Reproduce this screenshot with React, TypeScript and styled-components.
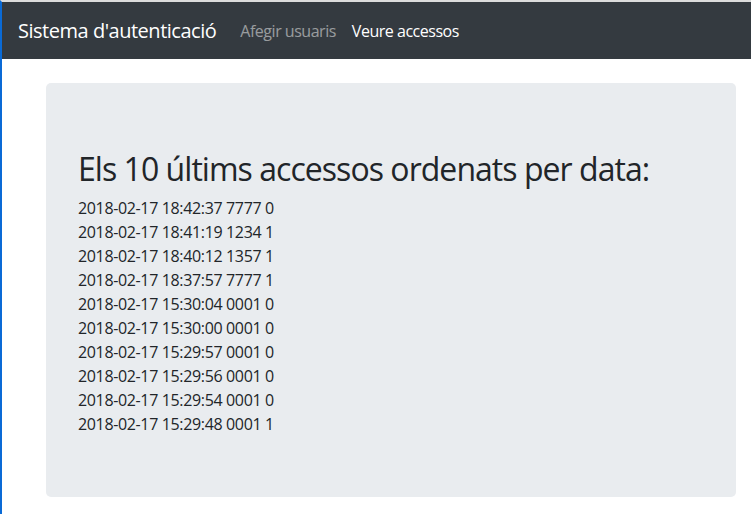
import styled, { createGlobalStyle } from 'styled-components'

const GlobalStyle = createGlobalStyle`
  html, body {
    margin: 0;
    padding: 0;
    background: #fff;
  }
  body {
    font-family: "Open Sans", "Noto Sans", Arial, sans-serif;
    font-size: 16px;
    line-height: 1.5;
    color: #212529;
    letter-spacing: -0.022em;
  }
`

const Frame = styled.div`
  min-height: 514px;
  box-sizing: border-box;
  border-left: 2px solid #0a6ad6;
  border-top: 2px solid #dcdcdc;
`

const NavBar = styled.nav`
  display: flex;
  align-items: center;
  height: 57px;
  box-sizing: border-box;
  padding: 8px 16px;
  background-color: #343a40;
`

const Brand = styled.a`
  color: #fff;
  font-size: 20px;
  margin-right: 16px;
  white-space: nowrap;
  text-decoration: none;
  letter-spacing: -0.024em;
`

const NavLinks = styled.div`
  display: flex;
`

const NavLink = styled.a<{ $active?: boolean }>`
  padding: 0 8px;
  color: ${(props) => (props.$active ? '#fff' : 'rgba(255, 255, 255, 0.5)')};
  font-size: 16px;
  letter-spacing: -0.03em;
  text-decoration: none;
  white-space: nowrap;
`

const Main = styled.main`
  padding: 24px 15px 18px 44px;
`

const Jumbotron = styled.section`
  background-color: #e9ecef;
  border-radius: 5px;
  padding: 67px 32px 61px;
`

const Title = styled.h2`
  margin: 0 0 8px 0;
  font-size: 32px;
  font-weight: 400;
  line-height: 1.2;
  letter-spacing: -0.03em;
`

const AccessRow = styled.div`
  font-size: 16px;
  line-height: 24px;
  white-space: nowrap;
`

const accesses = [
  '2018-02-17 18:42:37 7777 0',
  '2018-02-17 18:41:19 1234 1',
  '2018-02-17 18:40:12 1357 1',
  '2018-02-17 18:37:57 7777 1',
  '2018-02-17 15:30:04 0001 0',
  '2018-02-17 15:30:00 0001 0',
  '2018-02-17 15:29:57 0001 0',
  '2018-02-17 15:29:56 0001 0',
  '2018-02-17 15:29:54 0001 0',
  '2018-02-17 15:29:48 0001 1',
]

export default function App() {
  return (
    <Frame>
      <GlobalStyle />
      <NavBar>
        <Brand href="#">Sistema d'autenticació</Brand>
        <NavLinks>
          <NavLink href="#">Afegir usuaris</NavLink>
          <NavLink href="#" $active>
            Veure accessos
          </NavLink>
        </NavLinks>
      </NavBar>
      <Main>
        <Jumbotron>
          <Title>Els 10 últims accessos ordenats per data:</Title>
          {accesses.map((row) => (
            <AccessRow key={row}>{row}</AccessRow>
          ))}
        </Jumbotron>
      </Main>
    </Frame>
  )
}
